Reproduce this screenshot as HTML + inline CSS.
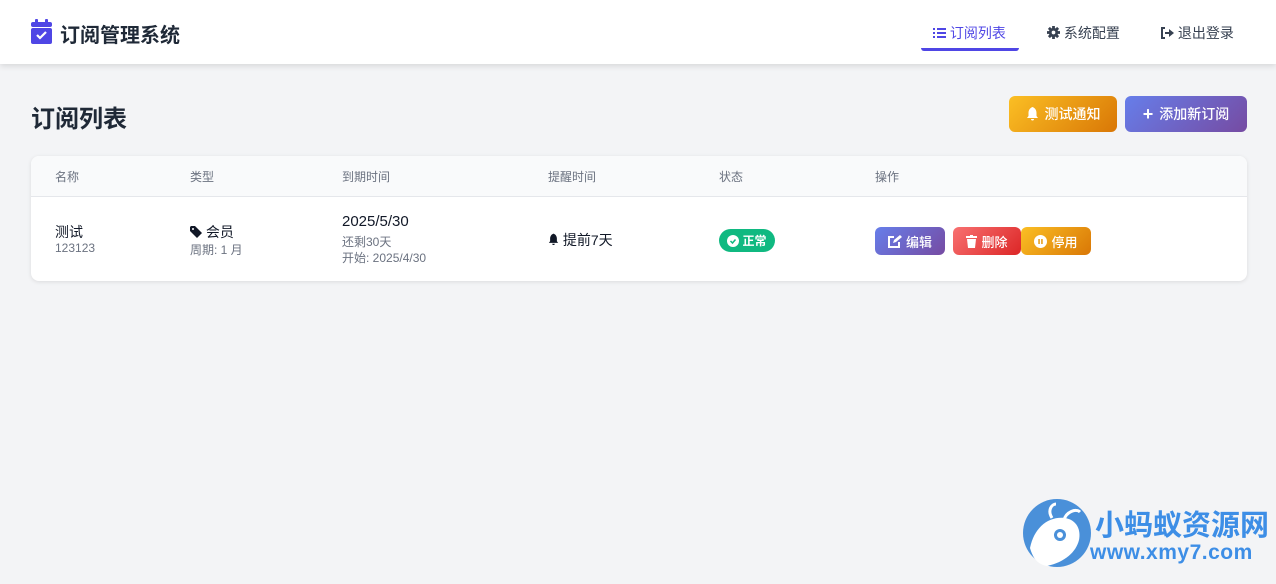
<!DOCTYPE html>
<html><head><meta charset="utf-8"><style>
*{box-sizing:border-box;margin:0;padding:0}
body{width:1276px;height:584px;background:#f3f4f6;font-family:"Liberation Sans","Noto Sans CJK SC",sans-serif;color:#111827;position:relative;overflow:hidden}
.hdr{position:absolute;left:0;top:0;width:1276px;height:64px;background:#fff;box-shadow:0 2px 6px rgba(0,0,0,.12)}
.abs{position:absolute;white-space:nowrap}
.btn{position:absolute;border-radius:6px;color:#fff;font-size:14px;display:flex;align-items:center;justify-content:center;gap:6px;font-weight:500}
.th{position:absolute;top:168px;font-size:12px;color:#6b7280}
.sm{font-size:12px;color:#6b7280}
</style></head><body>
<div class="hdr"></div>
<svg class="abs" style="left:31px;top:19px" width="21" height="26" viewBox="0 0 21 26"><rect x="4" y="0" width="3" height="6" rx="1" fill="#4f46e5"/><rect x="14" y="0" width="3" height="6" rx="1" fill="#4f46e5"/><rect x="0" y="3" width="21" height="5" rx="2" fill="#4f46e5"/><rect x="0" y="9" width="21" height="16" rx="2" fill="#4f46e5"/><path d="M6 16l3 3 6-6" stroke="#fff" stroke-width="2.2" fill="none"/></svg>
<div class="abs" style="left:60px;top:19px;font-size:20px;font-weight:bold;color:#1f2937">订阅管理系统</div>
<div class="abs" style="left:933px;top:23px;font-size:14px;color:#4f46e5">
<svg width="13" height="12" viewBox="0 0 13 12" style="vertical-align:-1px"><g fill="#4f46e5"><rect x="0" y="1" width="2" height="2"/><rect x="0" y="5" width="2" height="2"/><rect x="0" y="9" width="2" height="2"/><rect x="4" y="1" width="9" height="2"/><rect x="4" y="5" width="9" height="2"/><rect x="4" y="9" width="9" height="2"/></g></svg> 订阅列表</div>
<div class="abs" style="left:921px;top:48px;width:98px;height:3px;border-radius:0 0 6px 6px;background:#4f46e5"></div>
<div class="abs" style="left:1047px;top:23px;font-size:14px;color:#374151"><svg width="13" height="13" viewBox="0 0 14 14" style="vertical-align:-1px"><g fill="#374151"><circle cx="7" cy="7" r="5"/><rect x="5.5" y="0" width="3" height="14"/><rect x="0" y="5.5" width="14" height="3"/><rect x="5.5" y="0" width="3" height="14" transform="rotate(45 7 7)"/><rect x="5.5" y="0" width="3" height="14" transform="rotate(-45 7 7)"/></g><circle cx="7" cy="7" r="2" fill="#fff"/></svg> 系统配置</div>
<div class="abs" style="left:1160px;top:23px;font-size:14px;color:#374151"><svg width="14" height="12" viewBox="0 0 14 12" style="vertical-align:-1px"><path d="M5 1H2v10h3" stroke="#374151" stroke-width="2" fill="none"/><path d="M5 5h4V2l5 4-5 4V7H5z" fill="#374151"/></svg> 退出登录</div>
<div class="abs" style="left:31px;top:99px;font-size:24px;font-weight:bold;color:#1f2937">订阅列表</div>
<div class="btn" style="left:1009px;top:96px;width:108px;height:36px;background:linear-gradient(135deg,#fbbf24,#d97706)"><svg width="13" height="14" viewBox="0 0 13 14"><path d="M6.5 0C4 1 2.5 3 2.5 6v3L1 11h11l-1.5-2V6C10.5 3 9 1 6.5 0z M5 12h3a1.5 1.5 0 0 1-3 0z" fill="#fff"/></svg>测试通知</div>
<div class="btn" style="left:1125px;top:96px;width:122px;height:36px;background:linear-gradient(135deg,#667eea,#764ba2)"><span style="font-size:18px;font-weight:bold">+</span> 添加新订阅</div>
<div class="abs" style="left:31px;top:156px;width:1216px;height:125px;background:#fff;border-radius:8px;box-shadow:0 1px 4px rgba(0,0,0,.1);overflow:hidden"><div style="height:41px;background:#f9fafb;border-bottom:1px solid #e5e7eb"></div></div>
<div class="th" style="left:55px">名称</div><div class="th" style="left:190px">类型</div><div class="th" style="left:342px">到期时间</div><div class="th" style="left:548px">提醒时间</div><div class="th" style="left:719px">状态</div><div class="th" style="left:875px">操作</div>
<div class="abs" style="left:55px;top:222px;font-size:14px">测试</div>
<div class="abs sm" style="left:55px;top:241px">123123</div>
<div class="abs" style="left:190px;top:222px;font-size:14px"><svg width="12" height="12" viewBox="0 0 12 12" style="vertical-align:-1px"><path d="M0 1v4l7 7 5-5-7-7H1z" fill="#111827"/><circle cx="3" cy="3" r="1" fill="#fff"/></svg> 会员</div>
<div class="abs sm" style="left:190px;top:241px">周期: 1 月</div>
<div class="abs" style="left:342px;top:213px;font-size:15px">2025/5/30</div>
<div class="abs sm" style="left:342px;top:233px">还剩30天</div>
<div class="abs sm" style="left:342px;top:249px">开始: 2025/4/30</div>
<div class="abs" style="left:548px;top:230px;font-size:14px"><svg width="11" height="13" viewBox="0 0 13 14" style="vertical-align:-1px"><path d="M6.5 0C4 1 2.5 3 2.5 6v3L1 11h11l-1.5-2V6C10.5 3 9 1 6.5 0z M5 12h3a1.5 1.5 0 0 1-3 0z" fill="#111827"/></svg> 提前7天</div>
<div class="btn" style="left:719px;top:229px;width:56px;height:23px;border-radius:12px;background:#10b981;font-size:12px;gap:3px;font-weight:bold"><svg width="12" height="12"><circle cx="6" cy="6" r="6" fill="#fff"/><path d="M3.5 6l2 2 3-3.5" stroke="#10b981" stroke-width="1.5" fill="none"/></svg>正常</div>
<div class="btn" style="left:875px;top:227px;width:70px;height:28px;background:linear-gradient(135deg,#667eea,#764ba2);font-size:13px;gap:4px"><svg width="14" height="13" viewBox="0 0 14 13"><path d="M6 2H1v10h10V7" stroke="#fff" stroke-width="2" fill="none"/><path d="M5 8l1-3 6-5 2 2-6 5z" fill="#fff"/></svg>编辑</div>
<div class="btn" style="left:953px;top:227px;width:68px;height:28px;background:linear-gradient(135deg,#f87171,#dc2626);font-size:13px;gap:4px"><svg width="11" height="13" viewBox="0 0 11 13"><rect x="0" y="1" width="11" height="2" fill="#fff"/><rect x="4" y="0" width="3" height="2" fill="#fff"/><path d="M1 4h9l-1 9H2z" fill="#fff"/></svg>删除</div>
<div class="btn" style="left:1021px;top:227px;width:70px;height:28px;background:linear-gradient(135deg,#fbbf24,#d97706);font-size:13px;gap:4px"><svg width="13" height="13"><circle cx="6.5" cy="6.5" r="6.5" fill="#fff"/><rect x="4.3" y="4" width="1.5" height="5" fill="#e59b10"/><rect x="7.2" y="4" width="1.5" height="5" fill="#e59b10"/></svg>停用</div>
<svg class="abs" style="left:1022px;top:498px" width="70" height="70" viewBox="0 0 70 70"><circle cx="35" cy="35" r="34" fill="#4a90d9"/><path d="M8 50c4-20 18-32 35-30 12 2 16 12 14 22-3 12-14 22-32 26-10-2-14-8-17-18z" fill="#fff"/><circle cx="38" cy="37" r="6" fill="#4a90d9"/><circle cx="38" cy="37" r="3" fill="#fff"/><path d="M30 20C25 12 30 6 34 6M42 22c2-8 12-12 16-8" stroke="#fff" stroke-width="3" fill="none"/></svg>
<div class="abs" style="left:1095px;top:502px;font-size:29px;font-weight:bold;color:#3d8ee6;letter-spacing:0px">小蚂蚁资源网</div>
<div class="abs" style="left:1090px;top:541px;font-size:21px;font-weight:bold;color:#3d8ee6;letter-spacing:0.5px">www.xmy7.com</div>
</body></html>
